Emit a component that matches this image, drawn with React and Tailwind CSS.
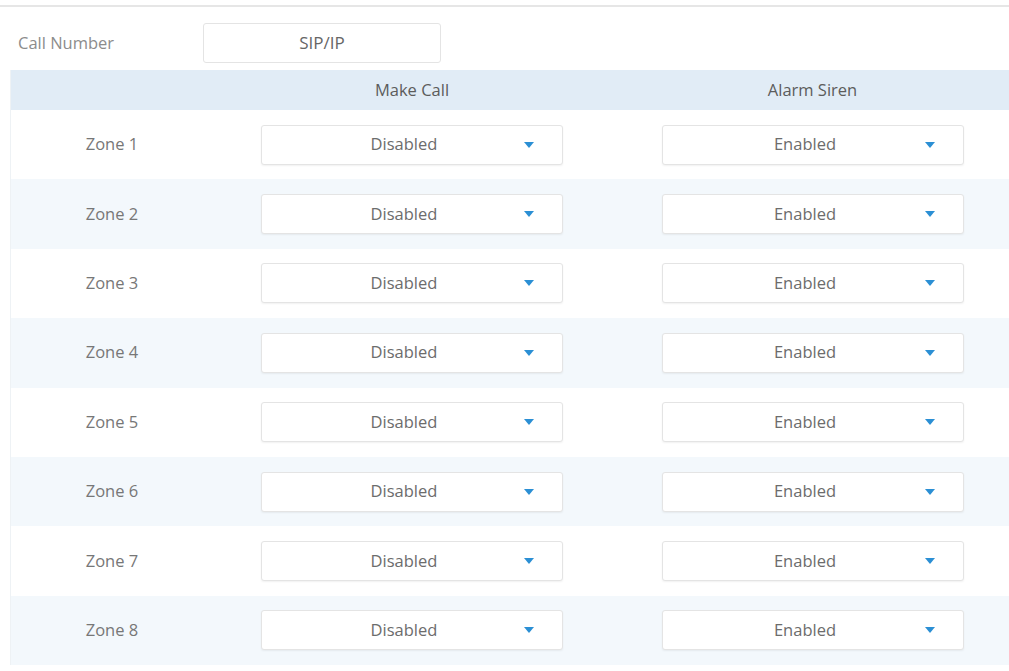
import React from "react";

const Arrow = () => (
  <svg width="10" height="6" viewBox="0 0 10 6" className="shrink-0">
    <path d="M0 0 L10 0 L5 6 Z" fill="#2b8fd4" />
  </svg>
);

const Select = ({ value }) => (
  <div className="relative flex items-center justify-center h-[40px] w-[302px] bg-white border border-[#e4e4e4] rounded-[3px] shadow-[0_1px_2px_rgba(0,0,0,0.06)]">
    <span className="text-[16.5px] text-[#6c6c6c] -ml-[16px]">{value}</span>
    <span className="absolute right-[28px] top-[16px] flex">
      <Arrow />
    </span>
  </div>
);

export default function App() {
  const zones = [1, 2, 3, 4, 5, 6, 7, 8];
  return (
    <div
      className="w-[1009px] h-[671px] bg-white overflow-hidden"
      style={{ fontFamily: "'Open Sans', Lato, sans-serif" }}
    >
      <div className="h-[5px]" />
      <div className="h-[2px] bg-[#e6e6e6]" />
      <div className="flex items-center h-[63px] pt-[9px]">
        <div className="w-[203px] pl-[18px] text-[16.5px] text-[#8c8c8c]">Call Number</div>
        <div className="w-[238px] h-[40px] border border-[#e4e4e4] rounded-[3px] flex items-center justify-center text-[17px] text-[#666]">
          SIP/IP
        </div>
      </div>
      <div className="ml-[10px] border-l border-[#eef2f5]">
        <div className="grid grid-cols-[202px_398px_1fr] h-[40px] bg-[#e1ecf6] items-center text-[16.5px] text-[#5c5c5c]">
          <div />
          <div className="text-center">Make Call</div>
          <div className="text-center pl-[5px]">Alarm Siren</div>
        </div>
        {zones.map((z) => (
          <div
            key={z}
            className={`grid grid-cols-[202px_398px_1fr] h-[69.4px] items-center ${z % 2 === 0 ? "bg-[#f3f8fc]" : "bg-white"}`}
          >
            <div className="text-center text-[16.5px] text-[#777]">Zone {z}</div>
            <div className="pl-[48px]">
              <Select value="Disabled" />
            </div>
            <div className="pl-[51px]">
              <Select value="Enabled" />
            </div>
          </div>
        ))}
      </div>
    </div>
  );
}
